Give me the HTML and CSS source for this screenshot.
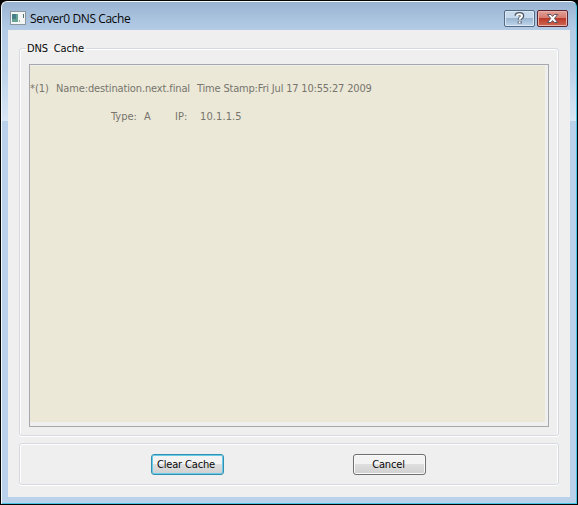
FILE: index.html
```html
<!DOCTYPE html>
<html lang="en">
<head>
<meta charset="utf-8">
<title>Server0 DNS Cache</title>
<link rel="stylesheet" href="styles.css">
</head>
<body>
<div class="window">
  <header class="titlebar">
    <svg class="app-icon" width="16" height="14" viewBox="0 0 16 14">
      <rect x=".5" y=".5" width="15" height="13" fill="#f4f6f5" stroke="#8b959e"/>
      <rect x="2" y="3" width="6" height="8" fill="#67a394"/>
      <path d="M2 3h4v5H2z" fill="#477f88"/>
      <path d="M9 9h1v2H9z" fill="#a6aaab"/>
      <path d="M13 3h1v4h-1z" fill="#56716e"/>
    </svg>
    <h1 class="title">Server0 DNS Cache</h1>
    <div class="controls">
      <button class="control" aria-label="Help">
        <svg width="29" height="15" viewBox="0 0 29 15"><path d="M11.4 4.8c.2-1.4 1.3-1.7 3.1-1.7 1.9 0 2.8.6 2.8 1.9 0 1.9-2.6 1.5-2.6 4M14.7 10.2v2.2" fill="none" stroke="#4b5664" stroke-width="4"/><path d="M11.9 4.8c.2-1.2 1.1-1.5 2.6-1.5 1.7 0 2.5.6 2.5 1.8 0 1.7-2.4 1.5-2.4 3.6M14.6 10.4v1.8" fill="none" stroke="#fff" stroke-width="2"/></svg>
      </button>
      <button class="control close" aria-label="Close">
        <svg width="29" height="15" viewBox="0 0 29 15"><path d="M9.5 3.5h3.4l1.7 1.9 1.7-1.9h3.4l-3.2 4 3.2 4h-3.4l-1.7-1.9-1.7 1.9H9.5l3.2-4z" fill="#fff" stroke="#565060"/></svg>
      </button>
    </div>
  </header>
  <main class="client">
    <fieldset class="group cache">
      <legend>DNS&nbsp; Cache</legend>
      <div class="viewer">
        <div class="page">
          <p class="line"><span class="index">*(1)</span><span class="name">Name:destination.next.final</span><span class="stamp">Time Stamp:Fri Jul 17 10:55:27 2009</span></p>
          <p class="line record"><span class="type">Type:</span><span class="kind">A</span><span class="ip">IP:</span><span class="address">10.1.1.5</span></p>
        </div>
      </div>
    </fieldset>
    <div class="group actions">
      <button class="button primary">Clear Cache</button>
      <button class="button">Cancel</button>
    </div>
  </main>
</div>
</body>
</html>
```
FILE: styles.css
```css
* { box-sizing: border-box; }
body {
  margin: 0;
  background: #050505;
  font-family: "DejaVu Sans Condensed", "DejaVu Sans", sans-serif;
  font-stretch: condensed;
  font-size: 11px;
}
.window {
  width: 576px;
  height: 503px;
  margin-left: 1px;
  margin-top: 1px;
  border: 1px solid #f4f9fc;
  border-right-color: #48c4e5;
  border-bottom-color: #48c4e5;
  border-radius: 6px 6px 0 0;
  padding: 0 6px 6px;
  background: linear-gradient(#99b4d2 0, #b3cbe5 27px, #bad1e9 65px, #d9e7f5 119px, #b9d1ea 119px);
}
.titlebar { display: flex; height: 28px; padding: 8px 2px 0 2px; }
.app-icon { margin-top: 1px; }
.title {
  margin: 0 0 0 4px;
  font: 12px/17px "Open Sans", sans-serif;
  letter-spacing: -.42px;
  color: #080808;
}
.controls { display: flex; gap: 2px; margin-left: auto; }
.control {
  width: 31px;
  height: 17px;
  padding: 0;
  border: 1px solid #536a85;
  border-radius: 2px;
  background: linear-gradient(#c7d9ec 0 48%, #9cb6d1 50%, #bed5ec);
  box-shadow: inset 0 0 0 1px #dce9f5;
}
.control svg { display: block; }
.control.close {
  border-color: #5c2732;
  background: linear-gradient(#e2a096 0, #d37b6d 48%, #bb392b 50%, #cf6850);
  box-shadow: inset 0 0 0 1px #e8b1a9;
}
.client {
  height: 467px;
  padding: 11px 11px 12px;
  background: #efefef;
}
.group {
  margin: 0;
  border: 1px solid #d6dae0;
  border-radius: 3px;
  box-shadow: inset 1px 1px #fff, inset -1px 0 #fff, 0 1px #fff;
}
.cache { height: 395px; padding: 9px; }
legend {
  padding: 1px 2px 0 1px;
  margin-left: -3px;
  height: 14px;
  line-height: 14px;
  letter-spacing: -.15px;
  color: #080808;
}
.viewer {
  width: 520px;
  height: 363px;
  border: 1px solid #a7a8ac;
  padding: 1px 3px 5px 0;
}
.page { height: 356px; padding-top: 16px; background: #ebe8d8; color: #77756c; }
.line { display: flex; height: 14px; margin: 0; line-height: 14px; white-space: pre; }
.record { margin-top: 14px; padding-left: 81px; }
.index { width: 26px; }
.name { width: 141px; letter-spacing: -.13px; }
.stamp { letter-spacing: -.19px; }
.type { width: 33px; }
.kind { width: 31px; }
.ip { width: 25px; }
.address { letter-spacing: .1px; }
.actions {
  display: flex;
  gap: 129px;
  height: 42px;
  margin-top: 7px;
  padding: 10px 0 0 131px;
}
.button {
  width: 73px;
  height: 21px;
  padding: 0;
  border: 1px solid #707070;
  border-radius: 3px;
  background: linear-gradient(#f3f3f3 0 48%, #dedede 50%, #d0d0d0);
  box-shadow: inset 0 0 0 1px #fafafa;
  font: inherit;
  letter-spacing: -.15px;
  color: #080808;
}
.button:not(.primary) { padding-right: 2px; }
.primary { padding-right: 3px; border-color: #358fae; box-shadow: inset 0 0 0 1px #65cdea; }
```
